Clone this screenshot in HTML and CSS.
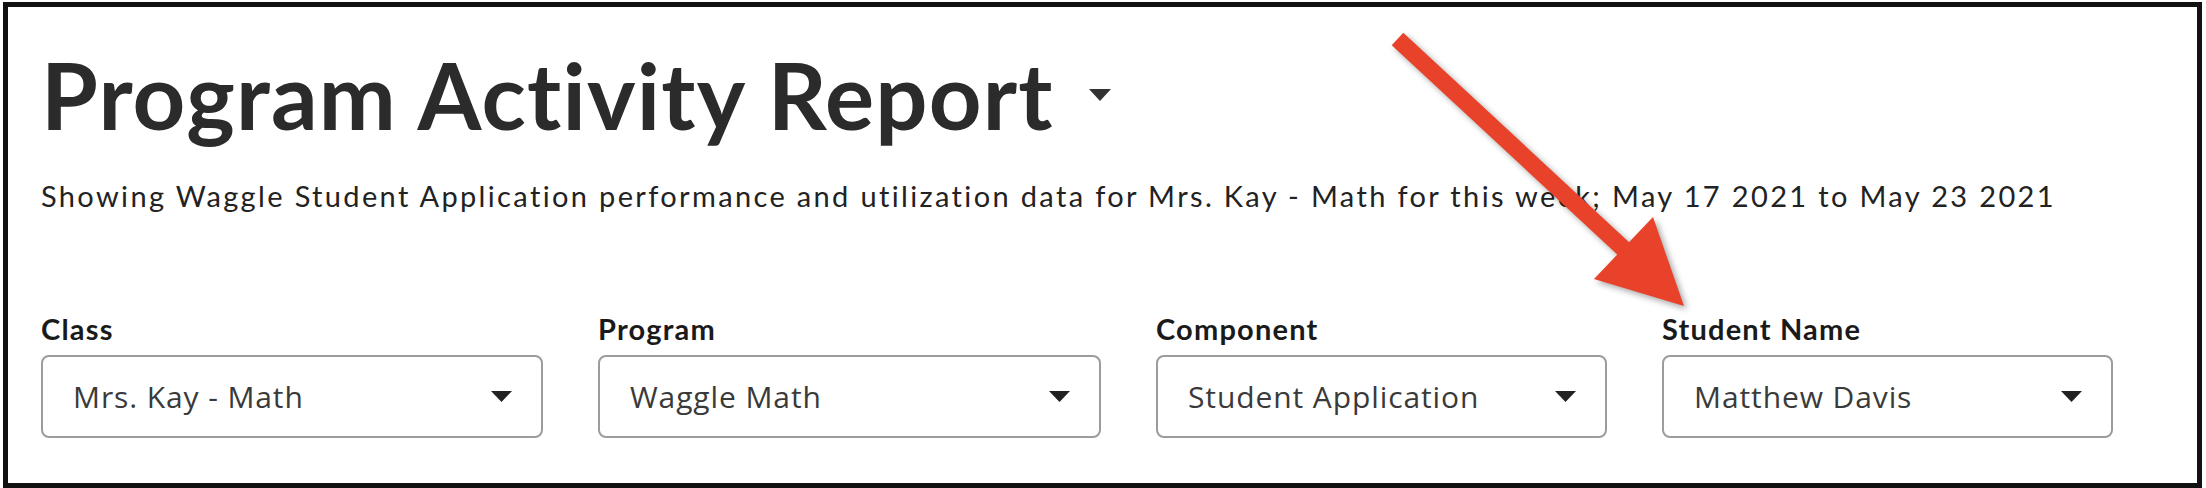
FILE: index.html
```html
<!DOCTYPE html>
<html lang="en">
<head>
    <meta charset="UTF-8">
    <meta name="viewport" content="width=device-width, initial-scale=1.0">
    <title>Program Activity Report</title>
    <link rel="stylesheet" href="styles.css">
</head>
<body>
    <div class="frame">
        <h1 class="title">
            <span>Program Activity Report</span>
            <svg class="caret" width="22" height="12" viewBox="0 0 22 12"><polygon points="0,0 22,0 11,12" fill="#333"/></svg>
        </h1>
        <p class="subtitle">Showing Waggle Student Application performance and utilization data for Mrs. Kay - Math for this week; May 17 2021 to May 23 2021</p>

        <div class="filters">
            <div class="filter">
                <label>Class</label>
                <div class="select">
                    <span>Mrs. Kay - Math</span>
                    <svg width="21" height="11" viewBox="0 0 21 11"><polygon points="0,0 21,0 10.5,11" fill="#222"/></svg>
                </div>
            </div>
            <div class="filter">
                <label>Program</label>
                <div class="select">
                    <span>Waggle Math</span>
                    <svg width="21" height="11" viewBox="0 0 21 11"><polygon points="0,0 21,0 10.5,11" fill="#222"/></svg>
                </div>
            </div>
            <div class="filter">
                <label>Component</label>
                <div class="select">
                    <span>Student Application</span>
                    <svg width="21" height="11" viewBox="0 0 21 11"><polygon points="0,0 21,0 10.5,11" fill="#222"/></svg>
                </div>
            </div>
            <div class="filter">
                <label>Student Name</label>
                <div class="select">
                    <span>Matthew Davis</span>
                    <svg width="21" height="11" viewBox="0 0 21 11"><polygon points="0,0 21,0 10.5,11" fill="#222"/></svg>
                </div>
            </div>
        </div>

        <!-- callout arrow pointing at the Student Name filter -->
        <svg class="callout" width="320" height="295" viewBox="1380 25 320 295">
            <line x1="1397.5" y1="39" x2="1626" y2="251" stroke="#e8432a" stroke-width="17"/>
            <polygon points="1594,279 1653,217 1684,306" fill="#e8432a"/>
        </svg>
    </div>
</body>
</html>
```

FILE: styles.css
```css
body {
    margin: 0;
    background: #fff;
    font-family: Lato, "Noto Sans", sans-serif;
}
.frame {
    position: relative;
    box-sizing: border-box;
    width: 2199px;
    height: 486px;
    margin: 2px 0 0 3px;
    padding: 0 0 0 33px;
    border: 5px solid #111;
    display: flex;
    flex-direction: column;
}
.title {
    display: flex;
    align-items: center;
    gap: 35px;
    margin: 42px 0 0 0;
    font-size: 92px;
    font-weight: 700;
    letter-spacing: 1.2px;
    line-height: 1;
    color: #2b2b2b;
}
.subtitle {
    margin: 40px 0 0 0;
    font-size: 29px;
    letter-spacing: 2.35px;
    line-height: 1;
    color: #222;
}
.filters {
    display: grid;
    grid-template-columns: 502px 503px 451px 451px;
    column-gap: 55px;
    margin-top: 104px;
}
.filter {
    display: flex;
    flex-direction: column;
    gap: 12px;
}
.filter label {
    font-size: 29px;
    font-weight: 700;
    letter-spacing: 1.2px;
    line-height: 1;
    color: #1a1a1a;
}
.select {
    box-sizing: border-box;
    height: 83px;
    display: flex;
    align-items: center;
    justify-content: space-between;
    padding: 0 29px 0 30px;
    border: 2px solid #9c9c9c;
    border-radius: 8px;
    font-family: "Open Sans", sans-serif;
    font-size: 30px;
    letter-spacing: 0.9px;
    color: #3a3a3a;
}
.callout {
    position: absolute;
    left: 1372px;
    top: 18px;
    pointer-events: none;
    filter: drop-shadow(3px 3px 3px rgba(0, 0, 0, 0.35));
}
```
